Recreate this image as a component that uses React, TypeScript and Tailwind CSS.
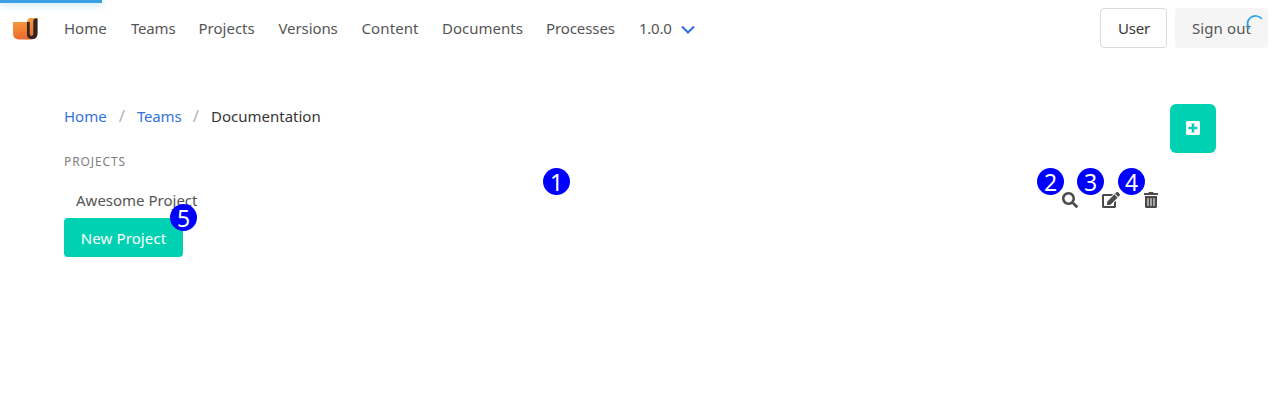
import type { ReactNode } from "react";
import { FaEdit, FaPlusSquare, FaSearch, FaTrashAlt } from "react-icons/fa";

const navItems = [
  { label: "Home", style: "w-[67px]" },
  { label: "Teams", style: "w-[67.5px] tracking-[-0.2px]" },
  { label: "Projects", style: "w-[80px]" },
  { label: "Versions", style: "w-[83px] tracking-[-0.1px]" },
  { label: "Content", style: "w-[80.5px] tracking-[0.1px]" },
  { label: "Documents", style: "w-[104px]" },
  { label: "Processes", style: "w-[93px] tracking-[-0.1px]" },
];

function Logo() {
  return (
    <svg width="28" height="24" viewBox="0 0 28 24" className="block">
      <defs>
        <linearGradient id="body" x1="0" y1="0" x2="0.2" y2="1">
          <stop offset="0" stopColor="#f7a241" />
          <stop offset="1" stopColor="#ee6a2c" />
        </linearGradient>
      </defs>
      <path d="M1 6h14Q15.500 2 18.500 2h7V17q0 6.500-6 6.500H7Q1 23.500 1 17z" fill="url(#body)" />
      <path d="M15 6h2.700v11q0 3 1.800 3t1.800-3V5Q21.300 2.500 23.500 2.500h2V17q0 6-5.500 6t-5-6z" fill="#2b2625" />
    </svg>
  );
}

function Badge({ n, className }: { n: number; className: string }) {
  return (
    <span className={`absolute flex size-[27px] items-center justify-center rounded-full bg-[#0000ff] pt-[2px] text-[23px] leading-none text-white ${className}`}>
      {n}
    </span>
  );
}

function Crumb({ children }: { children: ReactNode }) {
  return <a className="text-[#3273dc]">{children}</a>;
}

export default function App() {
  return (
    <div className="relative h-[400px] overflow-hidden bg-white font-['Noto_Sans','Open_Sans',sans-serif] text-[15px] leading-6 text-[#555]">
      <div className="absolute left-0 top-0 h-[2.5px] w-[102px] bg-[#3aa0e0] shadow-[0_0_8px_#29a3ee99]" />
      <nav className="flex h-14 items-center pl-3 pr-3">
        <div className="w-[52px]"><Logo /></div>
        {navItems.map((i) => (
          <a key={i.label} className={`whitespace-nowrap ${i.style}`}>{i.label}</a>
        ))}
        <a className="flex items-center tracking-[-0.25px]">
          1.0.0
          <svg width="14" height="10" viewBox="0 0 14 10" className="ml-[9px] mt-[3px]">
            <path d="m1 1.500 6 6 6-6" fill="none" stroke="#3273dc" strokeWidth="2.200" />
          </svg>
        </a>
        <div className="ml-auto flex gap-2">
          <button className="h-10 w-[67px] rounded border border-[#dbdbdb] pl-px tracking-[-0.2px] text-[#363636]">User</button>
          <button className="relative h-10 w-[93px] rounded bg-[#f5f5f5] tracking-[0.1px]">
            Sign out
            <svg width="18" height="18" viewBox="0 0 18 18" className="absolute left-[71px] top-[7px]">
              <path d="M3.200 14A7.300 7.300 0 0 1 15.800 4" fill="none" stroke="#29a3e8" strokeWidth="1.700" />
            </svg>
          </button>
        </div>
      </nav>
      <main className="flex justify-between pl-16 pr-16 pt-12">
        <section className="w-[1100px]">
          <div className="flex h-6 items-center whitespace-nowrap">
            <span className="w-[43px]"><Crumb>Home</Crumb></span>
            <span className="w-[30px] text-center text-[17px] text-[#b5b5b5]">/</span>
            <span className="w-[44px] tracking-[-0.2px]"><Crumb>Teams</Crumb></span>
            <span className="w-[30px] text-center text-[17px] text-[#b5b5b5]">/</span>
            <span className="text-[#363636]">Documentation</span>
          </div>
          <h2 className="mt-[24px] h-5 text-[12px] leading-5 tracking-[0.9px] text-[#808080]">PROJECTS</h2>
          <div className="relative mt-[10px] flex h-9 items-center pl-3">
            <span>Awesome Project</span>
            <div className="ml-auto flex items-center pr-[5px] text-[16px] text-[#4a4a4a]">
              <FaSearch className="mr-6" />
              <FaEdit className="mr-[23px] text-[18px]" />
              <FaTrashAlt />
            </div>
            <Badge n={1} className="left-[479px] top-[-14px]" />
            <Badge n={2} className="left-[973px] top-[-14px]" />
            <Badge n={3} className="left-[1013px] top-[-14px]" />
            <Badge n={4} className="left-[1054px] top-[-14px]" />
            <Badge n={5} className="left-[106px] top-[22px]" />
          </div>
          <button className="h-[39px] w-[119px] rounded bg-[#00d1b2] tracking-[0.1px] text-white">New Project</button>
        </section>
        <button className="flex h-[49px] w-[46px] shrink-0 items-center justify-center rounded-md bg-[#00d1b2] pb-px text-white">
          <FaPlusSquare size={16} />
        </button>
      </main>
    </div>
  );
}
